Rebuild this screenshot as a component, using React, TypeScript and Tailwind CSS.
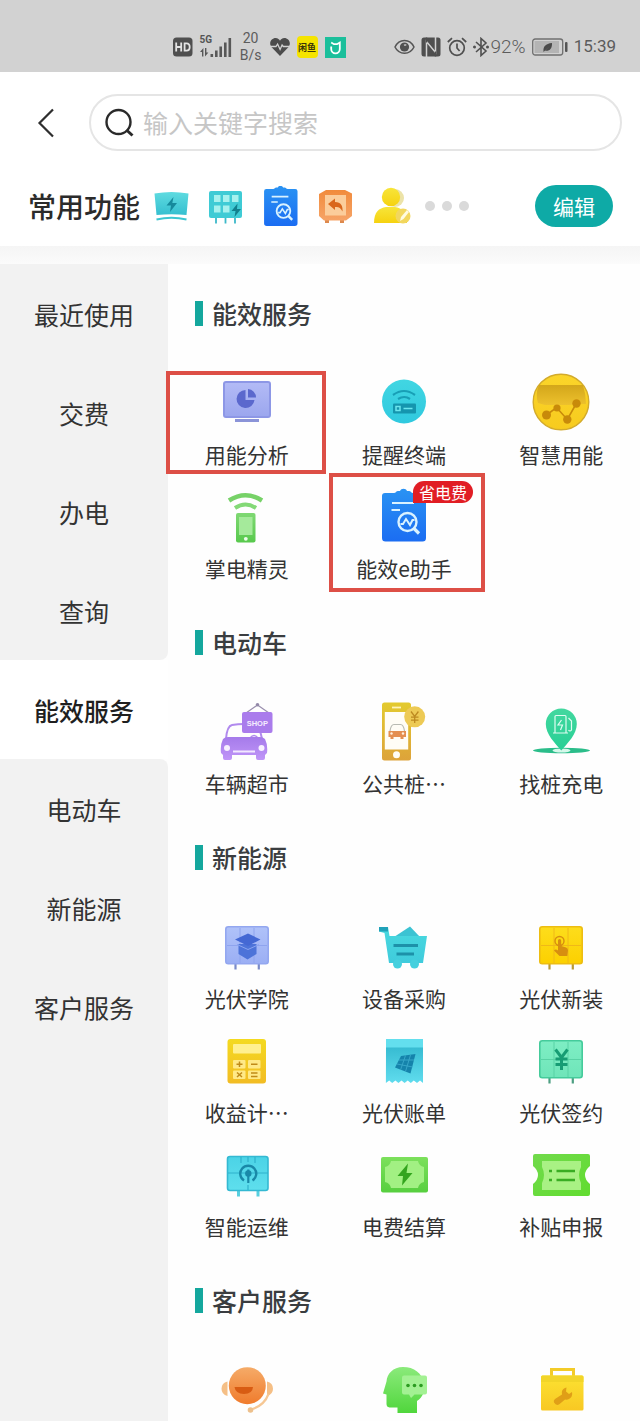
import React, { useId, useState } from "react";

function Canvas({ children, className = "size-[60px]", box = 60 }: { children: React.ReactNode; className?: string; box?: number }) {
  return (
    <svg className={className} viewBox={`0 0 ${box} ${box}`} fill="none" aria-hidden="true">
      {children}
    </svg>
  );
}

function Gradient({ id, from, to, diagonal = false }: { id: string; from: string; to: string; diagonal?: boolean }) {
  return (
    <defs>
      <linearGradient id={id} x1="0" y1="0" x2={diagonal ? "1" : "0"} y2="1">
        <stop offset="0" stopColor={from} />
        <stop offset="1" stopColor={to} />
      </linearGradient>
    </defs>
  );
}

/* ---------- status bar ---------- */

function HdIcon() {
  return (
    <svg className="h-5 w-5" viewBox="0 0 20 20" aria-hidden="true">
      <rect y="0.5" width="19.5" height="19" rx="3.5" fill="#4f4f4f" />
      <g stroke="#e4e4e4" strokeWidth="1.8" fill="none">
        <path d="M3.2 5.5v9M8.2 5.5v9M3.2 10h5" />
        <path d="M11.6 6.4h1.8c4.4 0 4.4 7.2 0 7.2h-1.8z" />
      </g>
    </svg>
  );
}

function SignalIcon() {
  return (
    <div className="relative h-6 w-8">
      <span className="absolute left-0 top-0 font-['Roboto'] text-[10px] font-bold leading-none text-[#555]">5G</span>
      <svg className="h-6 w-8" viewBox="0 0 32 24" fill="#585858" aria-hidden="true">
        <path d="M2 21.5V17H0l3.4-4v8.500zM5 13h1.400v4.500h2L5 21.500z" />
        <rect x="10.5" y="19" width="2.6" height="3" />
        <rect x="15" y="15.5" width="2.6" height="6.5" />
        <rect x="19.4" y="11.5" width="2.6" height="10.5" />
        <rect x="24" y="7.5" width="2.6" height="14.5" />
        <rect x="28.5" y="3" width="2.6" height="19" />
      </svg>
    </div>
  );
}

function HeartIcon() {
  return (
    <svg className="h-5 w-5" viewBox="0 0 20 20" aria-hidden="true">
      <path d="M10 19 1.6 10.2C-2 5.5 2 1 5.5 1 8 1 9.3 2.5 10 3.8 10.7 2.5 12 1 14.5 1 18 1 22 5.5 18.4 10.2z" fill="#4c4c4c" />
      <path d="M0 9.5h6l1.6-2.5 2.5 5.5 2-4.5 1.2 1.500H20" stroke="#d2d2d2" strokeWidth="1.3" fill="none" />
    </svg>
  );
}

function FishIcon() {
  return (
    <div className="flex h-[22px] w-[21px] items-center justify-center rounded-[4px] bg-[#f5e400] text-[9px] font-bold leading-none text-[#3a3608]">
      闲鱼
    </div>
  );
}

function MiIcon() {
  return (
    <svg className="h-[21px] w-[21px]" viewBox="0 0 21 21" aria-hidden="true">
      <rect width="21" height="21" fill="#1bbf9b" />
      <path d="M6.2 5.5 9 7.2h3l2.8-1.7V12a4.3 4.3 0 0 1-8.6 0V9.5" stroke="#fff" strokeWidth="1.8" fill="none" />
    </svg>
  );
}

function EyeIcon() {
  return (
    <svg className="h-5 w-[21px]" viewBox="0 0 21 20" fill="none" aria-hidden="true">
      <path d="M1 10C5 1.200 16 1.200 20 10 16 18.300 5 18.300 1 10z" stroke="#555" strokeWidth="1.500" />
      <circle cx="10.500" cy="10" r="4.600" fill="#505050" />
      <path d="M10 8.200a2 2 0 0 1 2.300 0" stroke="#ddd" strokeWidth="1.200" />
    </svg>
  );
}

function NfcIcon() {
  return (
    <svg className="h-5 w-5" viewBox="0 0 20 20" fill="none" aria-hidden="true">
      <rect x="0.5" y="0.5" width="19" height="19" rx="2.500" fill="#4f4f4f" />
      <path d="M5.500 20V4.500l9 11V0" stroke="#d2d2d2" strokeWidth="1.500" />
      <path d="M5.500 5.500v-5M14.500 14.500v5" stroke="#4f4f4f" strokeWidth="1.500" />
    </svg>
  );
}

function AlarmIcon() {
  return (
    <svg className="h-5 w-5" viewBox="0 0 20 20" fill="none" stroke="#505050" strokeWidth="1.7" aria-hidden="true">
      <circle cx="10" cy="11" r="7.3" />
      <path d="M10 6.5V11l2.600 3M.8 5 5 1.200M19.200 5 15 1.200" />
    </svg>
  );
}

function BluetoothIcon() {
  return (
    <svg className="h-5 w-4" viewBox="0 0 16 20" fill="none" stroke="#505050" strokeWidth="1.6" aria-hidden="true">
      <path d="m3 5 10 9-5 4.500v-17L13 6 3 15" />
      <circle cx="1.5" cy="10" r="0.7" fill="#505050" />
      <circle cx="14.5" cy="10" r="0.7" fill="#505050" />
    </svg>
  );
}

function BatteryIcon() {
  return (
    <svg className="h-5 w-9" viewBox="0 0 36 20" fill="none" aria-hidden="true">
      <rect x="0.7" y="2" width="30" height="16" rx="2.5" stroke="#707070" strokeWidth="1.3" />
      <rect x="2.5" y="4" width="24.5" height="12" fill="#b4b4b4" />
      <path d="M11.500 14.500c-.5-5 2-7.800 8.500-8.500.3 5.500-2.500 8.500-7 7.700l4.500-4.500-6 5.800z" fill="#4a4a4a" />
      <rect x="33" y="5" width="2.5" height="10" rx="1" fill="#555" />
    </svg>
  );
}

/* ---------- shared artwork ---------- */

function Clipboard({ box, className }: { box: number; className: string }) {
  const id = useId();
  return (
    <svg className={className} viewBox={`0 0 ${box} ${box}`} fill="none" aria-hidden="true">
      <Gradient id={id} from="#2a93f3" to="#1b6df2" />
      <g transform={box === 40 ? "translate(-4 -1.500) scale(0.760)" : undefined}>
        <path d="M11 6h9c2 0 2-2 4-2h2c1-3 6-3 7 0h2c2 0 2 2 4 2h10a3 3 0 0 1 3 3v42a3.500 3.500 0 0 1-3.500 3.500H11.500A3.500 3.500 0 0 1 8 51V9a3 3 0 0 1 3-3z" fill={`url(#${id})`} />
        <path d="M18 16h22M17.500 23H26" stroke="#d9f2ff" strokeWidth="2.2" />
        <circle cx="33.5" cy="35" r="9" stroke="#d9f2ff" strokeWidth="2.4" />
        <path d="m39.500 41 5.500 5.500" stroke="#d9f2ff" strokeWidth="3.2" />
        <path d="M26.500 37h2.500l3-5 4 6 2.500-5h2" stroke="#d9f2ff" strokeWidth="2" />
      </g>
    </svg>
  );
}

function SolarPanel({ from, to, edge, line, leg, children }: { from: string; to: string; edge: string; line: string; leg: string; children: React.ReactNode }) {
  const id = useId();
  return (
    <Canvas>
      <Gradient id={id} from={from} to={to} />
      <path d="M18.500 46v6.500M41.800 46v6.500" stroke={leg} strokeWidth="2.2" />
      <rect x="8.8" y="9.8" width="42.4" height="37" rx="2.5" fill={`url(#${id})`} stroke={edge} strokeWidth="1.6" />
      <path d="M23 11v35M37 11v35M10 28.500h40" stroke={line} strokeWidth="1" />
      {children}
    </Canvas>
  );
}

/* ---------- frequently used row ---------- */

function QuickPower() {
  const id = useId();
  return (
    <Canvas box={40} className="size-10">
      <Gradient id={id} from="#5fdbe0" to="#35bfd0" />
      <path d="M2.500 7.500Q19.500 4.500 36.500 7.500L34.500 29Q19.500 27.500 4.500 29z" fill={`url(#${id})`} />
      <path d="M4.500 33.500Q19.500 30 34.500 33.500" stroke="#3cc6d1" strokeWidth="1.8" />
      <path d="m21.500 11-7 8.500h4.500l-1 6.500 7-9h-4.700z" fill="#168a9c" />
    </Canvas>
  );
}

function QuickPanel() {
  return (
    <Canvas box={40} className="size-10">
      <path d="M9 31v6.500M18.500 31v6.500M28 31v6.500" stroke="#3cb9c9" strokeWidth="1.8" />
      <rect x="2" y="5" width="33" height="27" rx="2" fill="#3fcbd5" />
      {[7, 16, 25].map((x) => (
        <rect key={x} x={x} y="9" width="6.5" height="7" fill="#a6f1ee" />
      ))}
      <rect x="7" y="19.5" width="6.5" height="7" fill="#a6f1ee" />
      <rect x="16" y="19.5" width="6.5" height="7" fill="#a6f1ee" />
      <path d="m30.500 17.500-6 7.500h4l-1 6 6.500-8h-4z" fill="#12808e" />
    </Canvas>
  );
}

function QuickReturn() {
  const id = useId();
  return (
    <Canvas box={40} className="size-10">
      <Gradient id={id} from="#f18b3c" to="#f6a467" />
      <path d="M8 33h4v4H8zM23 33h4v4h-4z" fill="#dd894e" />
      <path d="M9 4h19l7 3.500V30l-6 4.500H7L2 30V8z" fill={`url(#${id})`} />
      <rect x="8" y="9" width="21" height="20.5" fill="#fbcd9b" />
      <path d="m11 18 7-5.500v3.500c6 0 8 4 7.500 9.500-2-4-4-5-7.500-4.500V24z" fill="#d9661c" />
    </Canvas>
  );
}

function QuickUser() {
  const id = useId();
  return (
    <Canvas box={40} className="size-10">
      <Gradient id={id} from="#f7e53a" to="#f6d210" />
      <circle cx="23" cy="12" r="9" fill="#ece3a8" />
      <path d="M8 36q0-13 14-13t14 13z" fill="#efe3a0" />
      <circle cx="19" cy="11" r="9.2" fill={`url(#${id})`} />
      <path d="M2 37c0-11 5-15 12-16h9c7 1 12 6 12 16z" fill={`url(#${id})`} />
      <circle cx="31" cy="30" r="7.5" fill="#f2d75e" />
      <path d="m28 35 1-4 6-7 2 2-5.500 7z" fill="#fffbe0" />
    </Canvas>
  );
}

/* ---------- service tiles ---------- */

function MonitorIcon() {
  const id = useId();
  return (
    <Canvas>
      <Gradient id={id} from="#b3bbf6" to="#9ba6ee" />
      <path d="M18 46h24v3H18z" fill="#8b94d8" />
      <rect x="7" y="9" width="46" height="35" rx="2" fill={`url(#${id})`} stroke="#8d97e6" strokeWidth="2" />
      <path d="M28.500 17A9 9 0 1 0 37.500 27h-9z" fill="#5b68cd" />
      <path d="M31 16a8.500 8.500 0 0 1 8 8.500h-8z" fill="#5b68cd" />
    </Canvas>
  );
}

function RouterIcon() {
  const id = useId();
  return (
    <Canvas>
      <Gradient id={id} from="#41d6e2" to="#2fc9df" />
      <circle cx="30" cy="28.5" r="22" fill={`url(#${id})`} />
      <path d="M19 22q11-8 22 0M24 26q6.500-4 12 0" stroke="#189fb6" strokeWidth="2.2" />
      <rect x="19" y="30.5" width="23" height="10" rx="1" fill="#1595ae" />
      <path d="M22 33.500h4v4h-4zM29.500 35.500h9" stroke="#6be6ee" strokeWidth="1.5" />
    </Canvas>
  );
}

function SmartEnergyIcon() {
  const a = useId();
  const b = useId();
  return (
    <Canvas>
      <Gradient id={a} from="#fbd52a" to="#f7cb1e" />
      <Gradient id={b} from="#d3a61a" to="#edc12d" />
      <circle cx="30" cy="29" r="27.8" fill={`url(#${a})`} stroke="#d3ab2c" strokeWidth="1.4" />
      <path d="M8 12h44q3 9 3 19H44l-5 1H14l-7-2q-3-9 1-18z" fill={`url(#${b})`} />
      <path d="m15.500 42 10-7.500 10.800 12 9-16" stroke="#c88a0a" strokeWidth="1.6" />
      <g fill="#c88a0a">
        <circle cx="15.5" cy="42" r="4.5" />
        <circle cx="26" cy="35" r="3.6" />
        <circle cx="36.3" cy="46.5" r="4.2" />
        <circle cx="45.5" cy="30.5" r="4.2" />
      </g>
    </Canvas>
  );
}

function PhoneWifiIcon() {
  const id = useId();
  return (
    <Canvas>
      <Gradient id={id} from="#7fd873" to="#58c94d" />
      <path d="M12 13.500q16.500-10.500 33 0" stroke="#77d268" strokeWidth="4.5" />
      <path d="M18 21q10.500-7 21 0" stroke="#83d976" strokeWidth="4" />
      <rect x="19" y="26" width="19.5" height="29.5" rx="2" fill={`url(#${id})`} />
      <rect x="22" y="30" width="13.5" height="18" fill="#a5ea9b" />
      <circle cx="28.8" cy="51.8" r="1.9" fill="#effded" />
    </Canvas>
  );
}

function ClipboardIcon() {
  return <Clipboard box={60} className="size-[60px]" />;
}

function CarShopIcon() {
  const id = useId();
  return (
    <Canvas>
      <Gradient id={id} from="#a57bea" to="#c095f8" />
      <path d="M9 37q1-13 6-14 12-2 24 0 4 3 6 14" stroke="#b18aee" strokeWidth="2" />
      <path d="M33 36q4-5 8 0" stroke="#b18aee" strokeWidth="1.4" />
      <path d="M6 37q2-2 5-2h32q3 0 5 2 3 6 2 14l-2 2v3a2 2 0 0 1-2 2h-5a2 2 0 0 1-2-2v-3H15v3a2 2 0 0 1-2 2H8a2 2 0 0 1-2-2v-3l-2-2q-1-8 2-14z" fill={`url(#${id})`} />
      <circle cx="10" cy="46" r="3" fill="#f7f0ff" />
      <circle cx="44.5" cy="46" r="3" fill="#f7f0ff" />
      <path d="M16 49.500h22" stroke="#f2e8ff" strokeWidth="2" />
      <path d="m29 11 11.500-8L52 11" stroke="#9a8fae" strokeWidth="1.2" />
      <circle cx="40.5" cy="2.8" r="1.8" fill="#9389a8" />
      <rect x="25" y="10" width="30.5" height="21" rx="2" fill="#aa7cec" />
      <text x="40.3" y="23.5" textAnchor="middle" fill="#f5ecff" fontSize="7.5" fontWeight="700" fontFamily="Liberation Sans, sans-serif">SHOP</text>
    </Canvas>
  );
}

function PublicPileIcon() {
  const id = useId();
  return (
    <Canvas>
      <Gradient id={id} from="#e3ca2e" to="#dda33a" />
      <rect x="8" y="0.5" width="29" height="58" rx="2.5" fill={`url(#${id})`} />
      <path d="M18 5.500h9" stroke="#fff3b8" strokeWidth="1.8" />
      <rect x="10.8" y="10" width="23.4" height="37.5" fill="#fffdf6" />
      <circle cx="22.5" cy="52.8" r="3.5" fill="#fffdf6" />
      <path d="M16 29q1-6.500 4-6.500h6.500q3 0 4 6.500" stroke="#b9bbb3" strokeWidth="1.2" />
      <path d="M14.500 29h17.500v6h-2.500v2h-3v-2h-7v2h-3v-2h-2z" fill="#e48f51" />
      <circle cx="17.5" cy="31.5" r="1.2" fill="#fff1e0" />
      <circle cx="29" cy="31.5" r="1.2" fill="#fff1e0" />
      <circle cx="40.7" cy="14.8" r="10.5" fill="#edca55" />
      <path d="m37 9.500 3.700 5 3.700-5M40.700 14.500V21M37 15.200h7.500M37 18.200h7.500" stroke="#bd8a21" strokeWidth="1.3" />
    </Canvas>
  );
}

function PinChargeIcon() {
  const id = useId();
  return (
    <Canvas>
      <Gradient id={id} from="#43d89f" to="#27cf95" />
      <ellipse cx="30.5" cy="48.5" rx="28.5" ry="2.8" fill="#2bbd8a" />
      <ellipse cx="30.5" cy="48.5" rx="9" ry="2" fill="#d5f8ea" />
      <path d="M30.300 48.500C24 41 14.800 32.500 14.800 22a15.500 15.500 0 0 1 31 0c0 10.500-9.200 19-15.500 26.500z" fill={`url(#${id})`} />
      <path d="M24 30.500V14.500a1 1 0 0 1 1-1h9a1 1 0 0 1 1 1v16M22 31h15M37.500 16l3 3v9q-1.500 2-3 0" stroke="#dffcf1" strokeWidth="1.2" />
      <path d="m30.500 18-3.500 5h4.500l-2 5" stroke="#dffcf1" strokeWidth="1.2" />
    </Canvas>
  );
}

function AcademyIcon() {
  return (
    <SolarPanel from="#b0c2f9" to="#9baff4" edge="#93a7f0" line="#8fa4ee" leg="#7a8bc9">
      <path d="M21.500 27v10l9 5.500 9-5.500V27z" fill="#4d73d9" />
      <path d="m18 22.500 13-6 12.500 6-12.500 6.500z" fill="#4468d4" />
      <path d="m20 27.500 11 5 11-5" stroke="#8aa4f0" strokeWidth="1" />
    </SolarPanel>
  );
}

function CartIcon() {
  const id = useId();
  return (
    <Canvas>
      <Gradient id={id} from="#49d9df" to="#3fcbdc" />
      <path d="M20 20 36 9.500 46 20z" fill="#3cc3d3" />
      <path d="M5 10h9l1.500 9H53L49 46H15L10.500 16 5 14.500z" fill={`url(#${id})`} />
      <path d="M5 10h9v4.500H5z" fill="#20a2b9" />
      <path d="M19.500 28.500H44M22.500 37H40" stroke="#1d91a9" strokeWidth="2.8" />
      <circle cx="23.5" cy="47" r="4.5" fill="#45d0de" />
      <circle cx="40.5" cy="47" r="4.5" fill="#45d0de" />
    </Canvas>
  );
}

function InstallIcon() {
  return (
    <SolarPanel from="#fddd1c" to="#fcd000" edge="#edbd12" line="#f0b818" leg="#b99a35">
      <circle cx="28.5" cy="24" r="4.5" stroke="#d78e10" strokeWidth="1.4" />
      <path d="M27 23.500a1.600 1.600 0 0 1 3.200 0V29l5 1.500q2 .8 1.800 3l-.7 5.500h-7.800L23 33.500q1.500-2 4 0z" fill="#d78e10" />
    </SolarPanel>
  );
}

function CalculatorIcon() {
  const id = useId();
  return (
    <Canvas>
      <Gradient id={id} from="#f4da20" to="#f2bc24" />
      <rect x="10.5" y="8" width="38.5" height="44.5" rx="3" fill={`url(#${id})`} />
      <rect x="16" y="13" width="28" height="9.5" rx="1" fill="#fff08f" />
      {[16, 31].map((x) => (
        <React.Fragment key={x}>
          <rect x={x} y="29" width="12.5" height="8.5" rx="1" fill="#ffe987" />
          <rect x={x} y="39.5" width="12.5" height="8.5" rx="1" fill="#ffe987" />
        </React.Fragment>
      ))}
      <path d="M19.500 33.200h6M22.500 30.500V36M34 33.200h6.500M20 41.500l5 4.500M25 41.500 20 46M34 42h6.500M34 45.500h6.500" stroke="#c08a18" strokeWidth="1.5" />
    </Canvas>
  );
}

function BillIcon() {
  const id = useId();
  return (
    <Canvas>
      <Gradient id={id} from="#37bcd2" to="#60dcee" />
      <path d="M12 8h37v9H12z" fill="#63dfee" />
      <path d="M12 16.500h37V52l-3-2.500-3 2.500-3.200-2.500-3 2.500-3.100-2.500-3.100 2.500-3.100-2.500-3.100 2.500-3-2.500-3.200 2.500-3-2.500-3.300 2.500z" fill={`url(#${id})`} />
      <path d="m27 25 14.500-2-5 19.500-15.500-6z" fill="#1583ab" />
      <path d="M25 29h15M23 33l15.500 3M31.500 24.500l-5 14.500M36.500 24l-5 16.500" stroke="#3aa9cb" strokeWidth="0.9" />
    </Canvas>
  );
}

function ContractIcon() {
  return (
    <SolarPanel from="#7eeec4" to="#6fe5b9" edge="#45cb9b" line="#59d2a5" leg="#4d9f82">
      <path d="m24.500 18.500 6 8 6-8M30.500 26v13M24.500 28h12M24.500 33.500h12" stroke="#179c74" strokeWidth="3" />
    </SolarPanel>
  );
}

function OpsIcon() {
  const id = useId();
  return (
    <Canvas>
      <Gradient id={id} from="#4bd3e6" to="#5fdfed" />
      <path d="M21.500 44v7.500M41 44v7.500" stroke="#58cfdf" strokeWidth="3" />
      <rect x="10.5" y="11.5" width="40.5" height="34" rx="2.5" fill={`url(#${id})`} stroke="#34b9d2" strokeWidth="1.6" />
      <path d="M11 28h40M24 12v6M38 12v6M31 12v5M31 40v5" stroke="#2fb2cc" strokeWidth="1.2" />
      <path d="M27 35.500a8 8 0 1 1 8.500 0" stroke="#1989a8" strokeWidth="2.4" />
      <path d="M31.300 38V24.500" stroke="#1989a8" strokeWidth="2.2" />
      <circle cx="31.3" cy="28.5" r="3.2" fill="#1989a8" />
    </Canvas>
  );
}

function SettlementIcon() {
  const id = useId();
  return (
    <Canvas>
      <Gradient id={id} from="#7ce05c" to="#57cf3f" />
      <rect x="7" y="12" width="47" height="35.5" rx="2" fill={`url(#${id})`} />
      <path d="M17 16h27q1 5 6 6v15q-5 1-6 6H17q-1-5-6-6V22q5-1 6-6z" fill="#a2f083" />
      <path d="M34 18.500 23.500 31h5.500l-1 9.500L38.500 28h-6z" fill="#33a51e" />
    </Canvas>
  );
}

function SubsidyIcon() {
  const id = useId();
  return (
    <Canvas>
      <Gradient id={id} from="#71da4c" to="#61dc2f" diagonal />
      <path d="M4 9h53a2 2 0 0 1 2 2v10q-5 4-5 9t5 9v10a2 2 0 0 1-2 2H4a2 2 0 0 1-2-2V39q5-4 5-9t-5-9V11a2 2 0 0 1 2-2z" fill={`url(#${id})`} />
      <path d="M11 16h39v6q-4 8 0 16v7H11v-7q4-8 0-16z" fill="#a9f184" />
      <path d="M18 26h3M18 35h3M25.500 26H44M25.500 35H44" stroke="#39ad23" strokeWidth="2.6" />
    </Canvas>
  );
}

function AgentIcon() {
  const id = useId();
  return (
    <Canvas>
      <Gradient id={id} from="#f5ab68" to="#f07b2c" />
      <path d="M10.500 21.500v14.500q-6-1.500-6-7.200t6-7.300zM50 21.500v14.500q6-1.500 6-7.200t-6-7.300z" fill="#f5bf86" />
      <path d="M51.500 34q-4 11-16 15" stroke="#f6c794" strokeWidth="2.2" />
      <circle cx="33.5" cy="50" r="2.8" fill="#edc08c" />
      <circle cx="30.3" cy="25.7" r="18.5" fill={`url(#${id})`} />
      <path d="M17.500 27h18.500q-.5 7-9 7t-9.500-7z" fill="#d85c13" />
    </Canvas>
  );
}

function AdviceIcon() {
  const id = useId();
  return (
    <Canvas>
      <Gradient id={id} from="#8bea7b" to="#50d63c" />
      <path d="M29 7c-10 0-16 7-16.500 14.500L9 33.500l3.500 1V44q0 3 3 3.500h8V53H43V41c6-4 8-10 7-17C48.500 13 40 7 29 7z" fill={`url(#${id})`} />
      <path d="M30 15.500h21a2 2 0 0 1 2 2v15a2 2 0 0 1-2 2H40.500L37 38l-2-3.500h-5a2 2 0 0 1-2-2v-15a2 2 0 0 1 2-2z" fill="#a3f193" />
      <g fill="#2c9c21">
        <circle cx="34" cy="25.5" r="1.8" />
        <circle cx="40.5" cy="25.5" r="1.8" />
        <circle cx="47" cy="25.5" r="1.8" />
      </g>
    </Canvas>
  );
}

function ToolboxIcon() {
  const id = useId();
  return (
    <Canvas>
      <Gradient id={id} from="#fce231" to="#f8c823" />
      <path d="M20.500 17V9.500h22V17" stroke="#f3cb28" strokeWidth="3" />
      <rect x="10" y="15.5" width="42.5" height="35" rx="1.5" fill={`url(#${id})`} />
      <path d="M10 17a1.500 1.500 0 0 1 1.500-1.500H51a1.500 1.500 0 0 1 1.500 1.500v5H10z" fill="#f2d529" />
      <path d="M23 42.500q-1-2 1-3.500l7-4.500q-1-5 3-6.500l1.500-.5-.5 4 3 2.500 3-2q1 5-3 7-2 1-4 .5l-6 5q-3 1.500-5-2z" fill="#e09f17" />
    </Canvas>
  );
}

/* ---------- data ---------- */

type Service = {
  name: string;
  Icon: () => React.ReactElement;
  mark?: string;
  badge?: string;
  iconOnly?: boolean;
};

const sections: { title: string; services: Service[] }[] = [
  {
    title: "能效服务",
    services: [
      { name: "用能分析", Icon: MonitorIcon, mark: "-left-[2px] -top-[2px] h-[103px] w-[160px]" },
      { name: "提醒终端", Icon: RouterIcon },
      { name: "智慧用能", Icon: SmartEnergyIcon },
      { name: "掌电精灵", Icon: PhoneWifiIcon },
      { name: "能效e助手", Icon: ClipboardIcon, mark: "left-1 -top-[14px] h-[119px] w-[156px]", badge: "省电费" },
    ],
  },
  {
    title: "电动车",
    services: [
      { name: "车辆超市", Icon: CarShopIcon },
      { name: "公共桩…", Icon: PublicPileIcon },
      { name: "找桩充电", Icon: PinChargeIcon },
    ],
  },
  {
    title: "新能源",
    services: [
      { name: "光伏学院", Icon: AcademyIcon },
      { name: "设备采购", Icon: CartIcon },
      { name: "光伏新装", Icon: InstallIcon },
      { name: "收益计…", Icon: CalculatorIcon },
      { name: "光伏账单", Icon: BillIcon },
      { name: "光伏签约", Icon: ContractIcon },
      { name: "智能运维", Icon: OpsIcon },
      { name: "电费结算", Icon: SettlementIcon },
      { name: "补贴申报", Icon: SubsidyIcon },
    ],
  },
  {
    title: "客户服务",
    services: [
      { name: "客服", Icon: AgentIcon, iconOnly: true },
      { name: "建议", Icon: AdviceIcon, iconOnly: true },
      { name: "报修", Icon: ToolboxIcon, iconOnly: true },
    ],
  },
];

const categories = ["最近使用", "交费", "办电", "查询", "能效服务", "电动车", "新能源", "客户服务"];

/* ---------- page parts ---------- */

function StatusBar() {
  return (
    <div className="flex h-[72px] items-center justify-end gap-12 bg-[#d2d2d2] pr-6 pt-[22px] text-[#5c5c5c]">
      <div className="flex items-center gap-[7px]">
        <HdIcon />
        <SignalIcon />
        <div className="w-6 text-center font-['Roboto'] text-sm leading-[17px]">
          <div>20</div>
          <div>B/s</div>
        </div>
        <HeartIcon />
        <FishIcon />
        <MiIcon />
      </div>
      <div className="flex items-center gap-[6px]">
        <EyeIcon />
        <NfcIcon />
        <AlarmIcon />
        <div className="flex items-center gap-[2px]">
          <BluetoothIcon />
          <span className="font-['Roboto'] text-[19px] font-light">92%</span>
        </div>
        <BatteryIcon />
        <span className="font-['Roboto'] text-[17px]">15:39</span>
      </div>
    </div>
  );
}

function Header() {
  return (
    <header className="bg-white pb-[19px] pt-[22px]">
      <div className="flex items-center pl-8 pr-[18px]">
        <button type="button" aria-label="返回" className="flex h-10 w-7 items-center justify-center">
          <svg className="h-8 w-5" viewBox="0 0 20 32" fill="none" stroke="#2e2e2e" strokeWidth="2.2" aria-hidden="true">
            <path d="M17 2.500 3.500 16 17 29.500" />
          </svg>
        </button>
        <form className="ml-[29px] flex h-[57px] flex-1 items-center gap-2 rounded-full border-2 border-[#e5e5e5] px-[14px]" onSubmit={(e) => e.preventDefault()}>
          <svg className="size-[30px] shrink-0" viewBox="0 0 30 30" fill="none" stroke="#2a2a2a" strokeWidth="2.4" aria-hidden="true">
            <circle cx="13.5" cy="14" r="12" />
            <path d="m21.500 22 6 5.500" strokeWidth="3" />
          </svg>
          <input
            type="search"
            aria-label="搜索"
            placeholder="输入关键字搜索"
            className="mb-[2px] min-w-0 flex-1 bg-transparent text-[25px] leading-9 text-[#333] outline-none placeholder:text-[#c6c6c6]"
          />
        </form>
      </div>
      <div className="mt-[34px] flex h-[42px] items-center pl-7 pr-[27px]">
        <h1 className="text-[28px] font-medium leading-10 text-[#2b2b2b]">常用功能</h1>
        <div className="ml-3 flex items-center gap-[15px]">
          <a href="#power" aria-label="用电"><QuickPower /></a>
          <a href="#panel" aria-label="光伏"><QuickPanel /></a>
          <a href="#assistant" aria-label="能效e助手"><Clipboard box={40} className="size-10" /></a>
          <a href="#return" aria-label="退费"><QuickReturn /></a>
          <a href="#user" aria-label="户号"><QuickUser /></a>
        </div>
        <button type="button" aria-label="更多" className="ml-[13px] flex gap-[7px]">
          <span className="size-[10px] rounded-full bg-[#dadada]" />
          <span className="size-[10px] rounded-full bg-[#dadada]" />
          <span className="size-[10px] rounded-full bg-[#dadada]" />
        </button>
        <button type="button" className="ml-auto h-[42px] w-[78px] rounded-full bg-[#0eaaa6] text-[21px] leading-none text-white">
          编辑
        </button>
      </div>
    </header>
  );
}

function Sidebar({ active, onSelect }: { active: number; onSelect: (index: number) => void }) {
  return (
    <nav className="flex w-[168px] shrink-0 flex-col">
      {categories.map((name, i) => {
        const tone =
          i === active
            ? "bg-white font-medium text-[#1f1f1f]"
            : i === active - 1
              ? "rounded-br-lg bg-[#f2f2f2] text-[#333]"
              : i === active + 1
                ? "rounded-tr-lg bg-[#f2f2f2] text-[#333]"
                : "bg-[#f2f2f2] text-[#333]";
        return (
          <button key={name} type="button" onClick={() => onSelect(i)} className={`h-[99px] w-full text-[25px] leading-9 ${tone}`}>
            {name}
          </button>
        );
      })}
      <div className="flex-1 bg-[#f2f2f2]" />
    </nav>
  );
}

function Tile({ service }: { service: Service }) {
  const { name, Icon, mark, badge, iconOnly } = service;
  return (
    <a href={`#${name}`} aria-label={iconOnly ? name : undefined} className={`relative flex flex-col items-center ${iconOnly ? "" : "pb-[19px]"}`}>
      <span className="relative">
        <Icon />
        {badge && (
          <span className="absolute -top-[6px] left-[39px] flex h-[22px] w-[60px] items-center justify-center whitespace-nowrap rounded-full rounded-bl-none bg-[#e11d24] text-base leading-none text-white">
            {badge}
          </span>
        )}
      </span>
      {!iconOnly && <span className="mt-[7px] whitespace-nowrap text-[21px] leading-[28px] text-[#333]">{name}</span>}
      {mark && <span className={`pointer-events-none absolute border-4 border-[#dd4f46] ${mark}`} />}
    </a>
  );
}

export default function App() {
  const [active, setActive] = useState(4);
  return (
    <div className="flex min-h-screen flex-col bg-[#fefefe] font-['Noto_Sans_CJK_SC',sans-serif]">
      <StatusBar />
      <Header />
      <div className="h-[18px] bg-linear-to-b from-[#f5f5f5] to-[#fbfbfb]" />
      <div className="flex flex-1">
        <Sidebar active={active} onSelect={setActive} />
        <main className="flex flex-1 flex-col gap-[26px] pt-[34px]">
          {sections.map((section) => (
            <section key={section.title}>
              <h2 className="mb-[45px] ml-[27px] flex h-[30px] items-center gap-[9px] text-[25px] font-medium leading-[30px] text-[#3a3d40]">
                <span className="h-[25px] w-2 bg-[#14a79d]" />
                {section.title}
              </h2>
              <div className="grid grid-cols-3">
                {section.services.map((service) => (
                  <Tile key={service.name} service={service} />
                ))}
              </div>
            </section>
          ))}
        </main>
      </div>
    </div>
  );
}
